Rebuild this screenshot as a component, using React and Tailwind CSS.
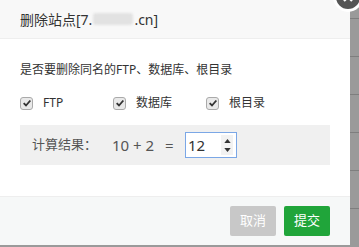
import React from "react";

const FONT = { fontFamily: '"Noto Sans", "Noto Sans CJK SC", sans-serif' };

function Check() {
  return (
    <span className="flex h-[13px] w-[13px] items-center justify-center rounded-[3px] border border-[#aaa] bg-[#e9e9e9]">
      <svg viewBox="0 0 12 12" className="h-[10px] w-[10px]">
        <path d="M2 6.2 L4.8 9 L10 3" fill="none" stroke="#333" strokeWidth="2.2" />
      </svg>
    </span>
  );
}

function Option({ label, className }) {
  return (
    <label className={`flex items-center gap-[10px] ${className}`}>
      <Check />
      <span>{label}</span>
    </label>
  );
}

export default function App() {
  return (
    <div className="relative flex h-[247px] w-[359px] overflow-hidden bg-[#9a9a9a]" style={FONT}>
      <div className="relative flex h-[245px] w-[350px] flex-col bg-white text-[#333]">
        <div className="flex h-[39px] items-center border-b border-[#eee] bg-[#f8f8f8] pl-5 text-[14px]">
          <span>删除站点[7.</span>
          <span className="mx-[1px] inline-block h-[12px] w-[40px] rounded-[3px] bg-[#e2e2e2] blur-[1px]" />
          <span>.cn]</span>
        </div>
        <div className="flex flex-1 flex-col px-5 text-[12px]">
          <p className="mt-[22px] leading-[18px]">是否要删除同名的FTP、数据库、根目录</p>
          <div className="mt-[15px] flex items-center leading-[18px]">
            <Option label="FTP" className="w-[93px]" />
            <Option label="数据库" className="w-[93px]" />
            <Option label="根目录" />
          </div>
          <div className="mt-[13px] flex h-[40px] items-center bg-[#f0f0f0] pl-3 text-[13px] text-[#555]">
            <span className="w-[80px]">计算结果：</span>
            <span className="w-[53px] text-[15px]">10 + 2</span>
            <span className="w-[20px] text-[15px]">=</span>
            <div className="flex h-[26px] w-[52px] items-center justify-between border border-[#7ba7e6] bg-white pl-[2px] pr-[3px] text-[15px] text-[#333]">
              <span>12</span>
              <div className="flex h-[20px] w-[12px] flex-col items-center justify-center gap-[5px] bg-[#f2f2f2]">
                <svg viewBox="0 0 8 5" className="h-[4px] w-[7px]"><path d="M0 5 L4 0 L8 5 Z" fill="#333" /></svg>
                <svg viewBox="0 0 8 5" className="h-[4px] w-[7px]"><path d="M0 0 L4 5 L8 0 Z" fill="#333" /></svg>
              </div>
            </div>
          </div>
        </div>
        <div className="flex h-[49px] items-center justify-end gap-2 border-t border-[#eee] bg-[#f6f8f8] pr-5 text-[13px] text-white">
          <button className="h-[30px] w-[46px] rounded-[2px] bg-[#c8c8c8]">取消</button>
          <button className="h-[30px] w-[46px] rounded-[2px] bg-[#20a53a]">提交</button>
        </div>
        <div className="absolute left-[333px] top-[-18px] flex h-[30px] w-[30px] items-center justify-center rounded-full border-[3px] border-white bg-[#555]">
          <svg viewBox="0 0 12 12" className="h-[12px] w-[12px]">
            <path d="M2 2 L10 10 M10 2 L2 10" stroke="#fff" strokeWidth="2.2" />
          </svg>
        </div>
      </div>
      <div className="flex flex-1 flex-col pt-[18px]">
        {[0, 1, 2, 3, 4, 5].map((i) => (
          <div key={i} className="h-[38px] border-t border-[#7e7e7e]" />
        ))}
      </div>
    </div>
  );
}
